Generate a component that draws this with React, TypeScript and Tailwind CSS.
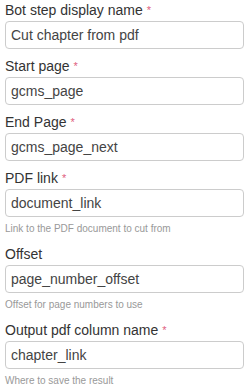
const fields = [
  { label: "Bot step display name", value: "Cut chapter from pdf", required: true },
  { label: "Start page", value: "gcms_page", required: true },
  { label: "End Page", value: "gcms_page_next", required: true },
  { label: "PDF link", value: "document_link", required: true, help: "Link to the PDF document to cut from" },
  { label: "Offset", value: "page_number_offset", help: "Offset for page numbers to use" },
  { label: "Output pdf column name", value: "chapter_link", required: true, help: "Where to save the result" },
];

export default function App() {
  return (
    <div className="w-[252px] h-[389px] bg-white pl-[5px] pr-[8px] font-['Liberation_Sans',Arial,sans-serif] overflow-hidden">
      {fields.map((f) => (
        <div key={f.label} className="mb-[7px]">
          <div className="h-[20px] leading-[20px] text-[14px] text-[#333] mb-px">
            {f.label}
            {f.required && <span className="text-[#e0607e] text-[11px] align-top ml-[4px]">*</span>}
          </div>
          <div className="h-[28px] border border-[#ccc] rounded-[4px] px-[5px] flex items-center text-[14px] text-[#444]">
            {f.value}
          </div>
          {f.help && (
            <div className="mt-[4px] h-[16px] leading-[16px] text-[10px] text-[#999]">{f.help}</div>
          )}
        </div>
      ))}
    </div>
  );
}
